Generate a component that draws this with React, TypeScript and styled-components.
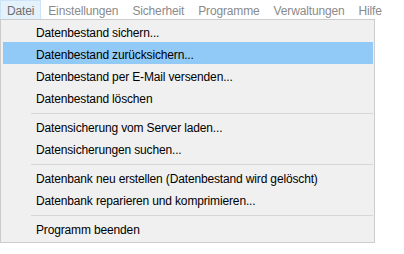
import React from "react";
import styled, { createGlobalStyle } from "styled-components";

const GlobalStyle = createGlobalStyle`
	html, body {
		margin: 0;
		padding: 0;
		background: #ffffff;
	}
	body {
		font-family: "Liberation Sans", Arial, sans-serif;
		font-size: 12px;
		letter-spacing: -0.15px;
	}
`;

const Screen = styled.div`
	width: 404px;
	height: 254px;
	background: #ffffff;
	overflow: hidden;
`;

const MenuBar = styled.div`
	display: flex;
	height: 19px;
	background: #ffffff;
`;

const BarItem = styled.div<{ $open?: boolean }>`
	box-sizing: border-box;
	height: 19px;
	padding: 1px 6px 0 ${(p) => (p.$open ? 6 : 6)}px;
	display: flex;
	align-items: center;
	color: ${(p) => (p.$open ? "#6e6e6e" : "#8a8a8a")};
	background: ${(p) => (p.$open ? "#e5f1fb" : "transparent")};
	border: 1px solid ${(p) => (p.$open ? "#cce4f7" : "transparent")};
	border-bottom: none;
`;

const Popup = styled.div`
	box-sizing: border-box;
	width: 375px;
	height: 224px;
	background: #f0f0f0;
	border: 1px solid #cccccc;
	padding: 0 1px 0 2px;
	display: flex;
	flex-direction: column;
`;

const Item = styled.div<{ $active?: boolean }>`
	height: 22px;
	flex-shrink: 0;
	display: flex;
	align-items: center;
	padding: 3px 0 0 33px;
	box-sizing: border-box;
	color: #000000;
	background: ${(p) => (p.$active ? "#91c9f7" : "transparent")};
	white-space: nowrap;
`;

const Separator = styled.div`
	height: 7px;
	flex-shrink: 0;
	display: flex;
	align-items: flex-end;
	padding-left: 28px;
	&::after {
		content: "";
		display: block;
		flex: 1;
		height: 1px;
		background: #d7d7d7;
		margin-bottom: 1px;
	}
`;

const barItems = [
	"Datei",
	"Einstellungen",
	"Sicherheit",
	"Programme",
	"Verwaltungen",
	"Hilfe",
];

type Entry = { label: string; active?: boolean } | "sep";

const entries: Entry[] = [
	{ label: "Datenbestand sichern..." },
	{ label: "Datenbestand zurücksichern...", active: true },
	{ label: "Datenbestand per E-Mail versenden..." },
	{ label: "Datenbestand löschen" },
	"sep",
	{ label: "Datensicherung vom Server laden..." },
	{ label: "Datensicherungen suchen..." },
	"sep",
	{ label: "Datenbank neu erstellen (Datenbestand wird gelöscht)" },
	{ label: "Datenbank reparieren und komprimieren..." },
	"sep",
	{ label: "Programm beenden" },
];

export default function App() {
	return (
		<Screen>
			<GlobalStyle />
			<MenuBar>
				{barItems.map((b, i) => (
					<BarItem key={b} $open={i === 0}>
						{b}
					</BarItem>
				))}
			</MenuBar>
			<Popup>
				{entries.map((e, i) =>
					e === "sep" ? (
						<Separator key={i} />
					) : (
						<Item key={i} $active={e.active}>
							{e.label}
						</Item>
					)
				)}
			</Popup>
		</Screen>
	);
}
